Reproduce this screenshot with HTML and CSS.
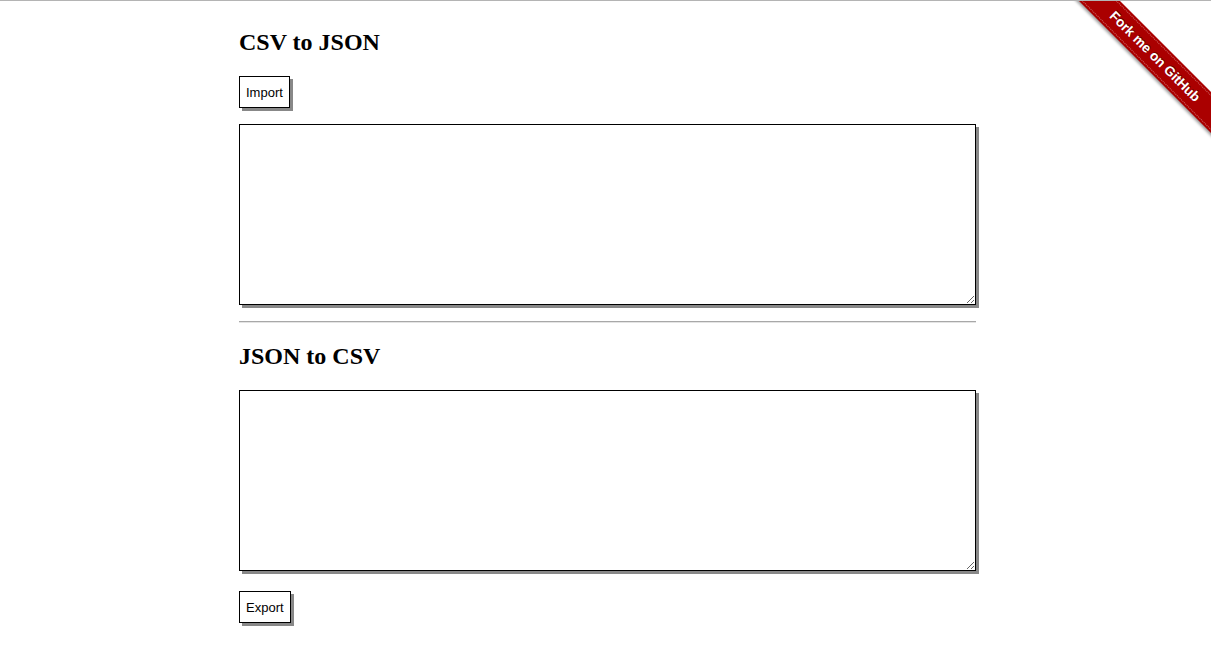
FILE: index.html
```html
<!DOCTYPE html>
<html>
<head>
<meta charset="utf-8">
<title>CSV to JSON</title>
<link rel="stylesheet" href="styles.css">
</head>
<body>
<div class="wrap">
  <h2 class="title">CSV to JSON</h2>
  <button class="btn btn-import" type="button">Import</button>
  <textarea class="box box-csv"></textarea>
  <hr class="sep">
  <h2 class="title">JSON to CSV</h2>
  <textarea class="box box-json"></textarea>
  <button class="btn btn-export" type="button">Export</button>
</div>
<a class="ribbon" href="#"><span class="band"><span class="band-text">Fork me on GitHub</span></span></a>
</body>
</html>
```

FILE: styles.css
```css
html {
  border-top: 1px solid #b4b4b4;
  background: #fff;
}
body {
  margin: 0;
  font-family: "Liberation Serif", "Times New Roman", serif;
}
.wrap {
  display: flow-root;
  width: 737px;
  margin-left: calc(50% - 366.5px);
  padding: 8px 0 20px;
}
.title {
  margin: 20px 0;
  font-size: 24px;
  line-height: 27px;
  font-weight: bold;
  color: #000;
}
.btn {
  display: block;
  height: 32px;
  padding: 0 6px;
  background: #fff;
  border: 1px solid #000;
  border-radius: 0;
  box-shadow: 3px 3px 0 #888;
  font-family: "Liberation Sans", Arial, sans-serif;
  font-size: 13px;
  color: #000;
}
.btn-import { margin: 0 0 16px; }
.btn-export { margin: 20px 0 0; }
.box {
  display: block;
  box-sizing: border-box;
  width: 737px;
  height: 181px;
  margin: 0;
  border: 1px solid #000;
  box-shadow: 3px 3px 0 #888;
  background: #fff;
}
.box-csv { margin-bottom: 16px; }
.sep {
  margin: 0;
  border: 0;
  border-top: 1px solid #a8a8a8;
  border-bottom: 1px solid #e4e4e4;
  height: 0;
}
.ribbon {
  position: absolute;
  top: 1px;
  right: 0;
  width: 149px;
  height: 149px;
  overflow: hidden;
  text-decoration: none;
}
.band {
  position: absolute;
  left: -7px;
  top: 41px;
  width: 200px;
  height: 29px;
  background: #a00;
  transform: rotate(45deg);
  box-shadow: 0 2px 3px rgba(0,0,0,0.4);
  display: flex;
  align-items: center;
  justify-content: center;
}
.band-text {
  display: block;
  width: 100%;
  box-sizing: border-box;
  height: 25px;
  line-height: 23px;
  border-top: 1px dotted rgba(255,255,255,0.4);
  border-bottom: 1px dotted rgba(255,255,255,0.4);
  text-align: center;
  font-family: "Liberation Sans", Arial, sans-serif;
  font-weight: bold;
  font-size: 13.5px;
  color: #fff;
  text-shadow: 0 -1px 0 rgba(0,0,0,0.5);
}
```
